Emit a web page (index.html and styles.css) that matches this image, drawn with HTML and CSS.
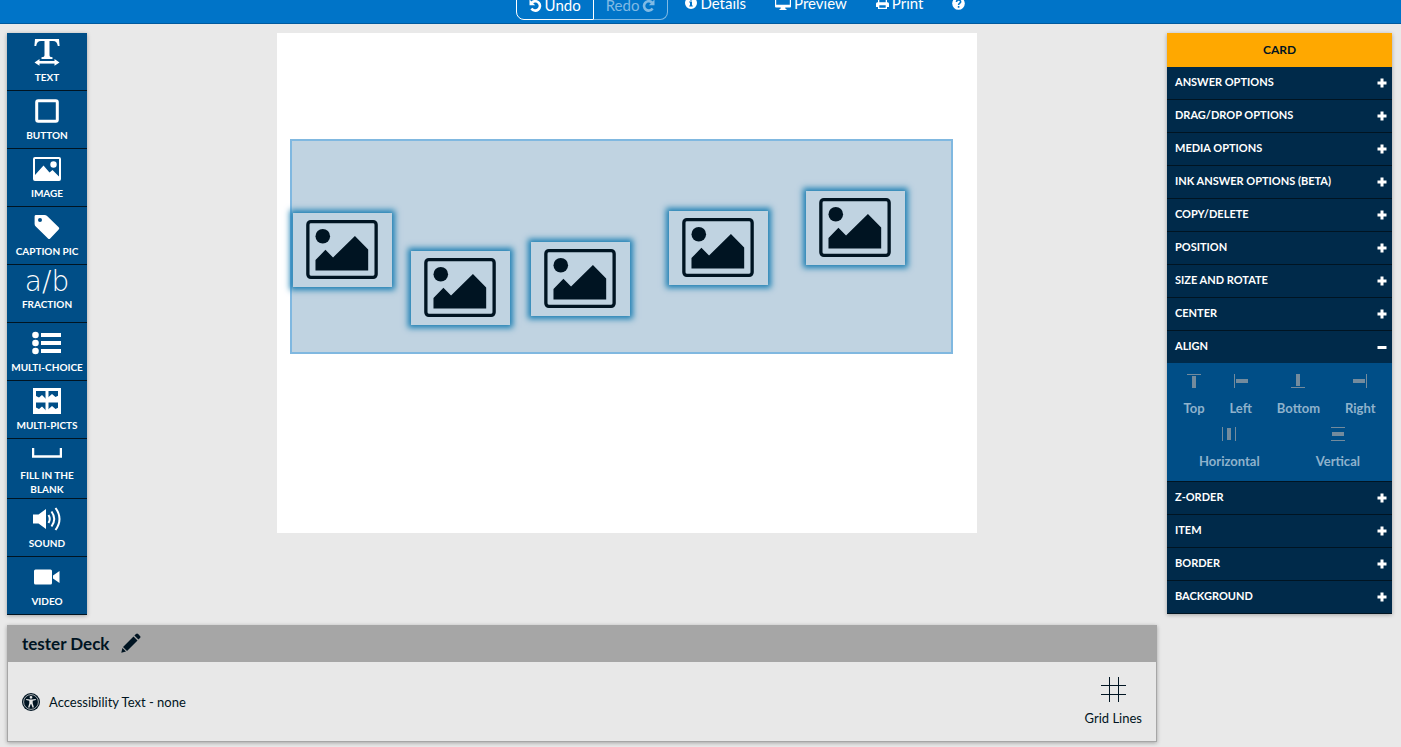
FILE: index.html
```html
<!DOCTYPE html>
<html lang="en">
<head>
    <meta charset="UTF-8">
    <meta name="viewport" content="width=device-width, initial-scale=1.0">
    <title>tester Deck</title>
    <link rel="stylesheet" href="styles.css">
</head>

<body>
    <!-- Shared icon shapes -->
    <svg class="icon-defs" aria-hidden="true">
        <symbol id="picture" viewBox="0 0 216 178">
            <rect x="5" y="5" width="206" height="168" rx="9" fill="none" stroke="currentColor" stroke-width="10"/>
            <circle cx="50" cy="49" r="22"/>
            <path d="M28 121 58 90 81 113 147 48 187 89V152H28z"/>
        </symbol>
        <symbol id="plus" viewBox="0 0 10 10">
            <path d="M3.5 .5h3v3h3v3h-3v3h-3v-3h-3v-3h3z"/>
        </symbol>
        <symbol id="minus" viewBox="0 0 10 10">
            <path d="M.5 4h9v3h-9z"/>
        </symbol>
    </svg>

    <header class="header">
        <div class="history">
            <button type="button">
                <svg width="13" height="13" viewBox="0 0 13 13"><path d="M3 3.500A4.700 4.700 0 1 1 2.400 9.600" fill="none" stroke="currentColor" stroke-width="2.600"/><path d="M.5 .5V6.200H6.200z"/></svg>
                Undo
            </button>
            <button type="button" disabled>
                Redo
                <svg width="13" height="13" viewBox="0 0 13 13"><path d="M10 3.500A4.700 4.700 0 1 0 10.600 9.600" fill="none" stroke="currentColor" stroke-width="2.600"/><path d="M12.500 .5V6.200H6.800z"/></svg>
            </button>
        </div>
        <nav class="menu">
            <a href="#">
                <svg width="12" height="12" viewBox="0 0 12 12"><path fill-rule="evenodd" d="M6 0a6 6 0 1 1 0 12A6 6 0 0 1 6 0zM5 1.700v1.800h2V1.700zM4.200 4.600v1H5v2.800h-.8v1.100h3.600V8.400H7V4.600z"/></svg>
                Details
            </a>
            <a href="#">
                <svg width="16" height="13" viewBox="0 0 16 13"><path fill-rule="evenodd" d="M1 0h14a1 1 0 0 1 1 1v8.500a1 1 0 0 1-1 1h-4.800l.4 1.500h.9v1h-7v-1h.9l.4-1.500H1a1 1 0 0 1-1-1V1a1 1 0 0 1 1-1zM1.200 1.200v6.600h13.600V1.200z"/></svg>
                Preview
            </a>
            <a href="#">
                <svg width="13" height="12" viewBox="0 0 13 12"><path fill-rule="evenodd" d="M2.500 0h7l1.500 1.600V5.200h.5A1.500 1.500 0 0 1 13 6.700V10h-2v2H2v-2H0V6.700a1.500 1.500 0 0 1 1.500-1.500h.5V0zM3.300 1.200v4h6.400V2.600H8V1.200zM3.300 8.300v2.500h6.400V8.300z"/></svg>
                Print
            </a>
            <a href="#" aria-label="Help">
                <svg width="13" height="13" viewBox="0 0 13 13"><circle cx="6.500" cy="6.500" r="6.300"/><path d="M4.500 5.100c0-2.800 4.200-2.700 4.100-.2C8.600 6.300 6.600 6.200 6.600 8M6.600 9v1.700" fill="none" stroke="#0074c8" stroke-width="1.600"/></svg>
            </a>
        </nav>
    </header>

    <main class="editor">
        <div class="work">
            <div class="board">
                <div class="tools">
                    <button type="button" class="tool">
                        <span class="tool-icon"><svg width="26" height="28" viewBox="0 0 26 28"><path d="M1 0h24l.6 7h-1.800C23.200 3.500 22 2 19 2h-3.500v14c0 1.700.7 2 3 2.200V20h-11v-1.800c2.300-.2 3-.5 3-2.200V2H7C4 2 2.800 3.500 2.200 7H.4z"/><path d="M5 22h16v2.600H5z"/><path d="M5.500 20v6.800L.5 23.400zM20.500 20v6.800l5-3.400z"/></svg></span>
                        <span class="tool-label">TEXT</span>
                    </button>
                    <button type="button" class="tool">
                        <span class="tool-icon"><svg width="24" height="24" viewBox="0 0 24 24"><rect x="1.700" y="1.700" width="20.600" height="20.600" rx="1.500" fill="none" stroke="currentColor" stroke-width="3"/></svg></span>
                        <span class="tool-label">BUTTON</span>
                    </button>
                    <button type="button" class="tool">
                        <span class="tool-icon"><svg width="28" height="24" viewBox="0 0 28 24"><rect x="1" y="1" width="26" height="22" rx="1" fill="none" stroke="currentColor" stroke-width="2"/><circle cx="20.500" cy="7.500" r="3.200"/><path d="M2 22.500V18l8.500-9.500 6 7 3-2.500 6.500 6.500v3z"/></svg></span>
                        <span class="tool-label">IMAGE</span>
                    </button>
                    <button type="button" class="tool">
                        <span class="tool-icon"><svg width="26" height="26" viewBox="0 0 26 26"><path fill-rule="evenodd" d="M2 1h8.500a4 4 0 0 1 2.600 1.100L24.700 13.300a1.500 1.500 0 0 1 0 2.200l-8.500 9a1.500 1.500 0 0 1-2.200 0L1.800 12.600A4 4 0 0 1 .6 10V2.400A1.400 1.400 0 0 1 2 1zM6 4a2 2 0 1 0 0 4 2 2 0 0 0 0-4z"/></svg></span>
                        <span class="tool-label">CAPTION PIC</span>
                    </button>
                    <button type="button" class="tool tool-fraction">
                        <span class="tool-icon">a/b</span>
                        <span class="tool-label">FRACTION</span>
                    </button>
                    <button type="button" class="tool">
                        <span class="tool-icon"><svg width="30" height="24" viewBox="0 0 30 24"><circle cx="3.500" cy="4" r="3.300"/><circle cx="3.500" cy="12" r="3.300"/><circle cx="3.500" cy="20" r="3.300"/><path d="M9 2h20v4H9zM9 10h20v4H9zM9 18h20v4H9z"/></svg></span>
                        <span class="tool-label">MULTI-CHOICE</span>
                    </button>
                    <button type="button" class="tool">
                        <span class="tool-icon"><svg width="28" height="26" viewBox="0 0 28 26"><path d="M1.500 1.500h25v23h-25zM14 1v24M1 13h26" fill="none" stroke="currentColor" stroke-width="3"/><path d="M3 12V8l3 1.500 3-2.500 4 4v1zM15 12V9.500L19 6l3.500 3 3-1.500V12zM3 24v-4.500l3 1.500 3-2.500 4 4V24zM15 24v-2.500l4-3.500 3.500 3 3-1.500V24z"/></svg></span>
                        <span class="tool-label">MULTI-PICTS</span>
                    </button>
                    <button type="button" class="tool tool-blank">
                        <span class="tool-icon"><svg width="30" height="10" viewBox="0 0 30 10"><path d="M1 0v8.500h28V0" fill="none" stroke="currentColor" stroke-width="2.500"/></svg></span>
                        <span class="tool-label">FILL IN THE BLANK</span>
                    </button>
                    <button type="button" class="tool">
                        <span class="tool-icon"><svg width="28" height="24" viewBox="0 0 28 24"><path d="M0 7.500h5.500L13 2v20l-7.500-5.500H0z"/><path d="M15.500 8q2.500 4 0 8M18.500 4.500q5.500 7.500 0 15M22.500 1q8 11 0 22" fill="none" stroke="currentColor" stroke-width="2"/></svg></span>
                        <span class="tool-label">SOUND</span>
                    </button>
                    <button type="button" class="tool">
                        <span class="tool-icon"><svg width="26" height="16" viewBox="0 0 26 16"><rect x="0" y=".5" width="18" height="15" rx="1.500"/><path d="M19 6.500 25.500 2v12L19 9.500z"/></svg></span>
                        <span class="tool-label">VIDEO</span>
                    </button>
                </div>

                <div class="stage-area">
                    <div class="stage">
                        <div class="selection"></div>
                        <div class="item item-1"><svg><use href="#picture"/></svg></div>
                        <div class="item item-2"><svg><use href="#picture"/></svg></div>
                        <div class="item item-3"><svg><use href="#picture"/></svg></div>
                        <div class="item item-4"><svg><use href="#picture"/></svg></div>
                        <div class="item item-5"><svg><use href="#picture"/></svg></div>
                    </div>
                </div>
            </div>

            <section class="deck">
                <div class="deck-title">
                    <h1>tester Deck</h1>
                    <button type="button" aria-label="Rename deck">
                        <svg width="20" height="20" viewBox="0 0 20 20"><path d="M15 1a1.500 1.500 0 0 1 2.100 0L19 2.900A1.500 1.500 0 0 1 19 5l-1.600 1.600-4-4zM12.500 3.500l4 4L6 18l-4-4zM1.400 15l3.600 3.600L.3 19.700z"/></svg>
                    </button>
                </div>
                <div class="deck-body">
                    <button type="button" class="access">
                        <svg width="18" height="18" viewBox="0 0 18 18"><circle cx="9" cy="9" r="9"/><circle cx="9" cy="9" r="7.400" fill="none" stroke="#e8e8e8" stroke-width=".7"/><path fill="#e8e8e8" d="M9 2.900a1.400 1.400 0 1 1 0 2.800 1.400 1.400 0 0 1 0-2.800zM4.300 5.900 7.800 6.500h2.400l3.500-.6.2 1.100-3.200.8v2.500l1.200 4-1.200.4L9.200 11h-.4l-1.500 3.700-1.200-.4 1.200-4V7.800L4.100 7z"/></svg>
                        Accessibility Text - none
                    </button>
                    <button type="button" class="grid-lines">
                        <svg width="25" height="25" viewBox="0 0 25 25"><path d="M0 8.500h25M0 17.500h25M8.500 0v25M17.500 0v25" fill="none" stroke="currentColor"/></svg>
                        Grid Lines
                    </button>
                </div>
            </section>
        </div>

        <aside class="options">
            <h2>CARD</h2>
            <button type="button" class="option">ANSWER OPTIONS <svg><use href="#plus"/></svg></button>
            <button type="button" class="option">DRAG/DROP OPTIONS <svg><use href="#plus"/></svg></button>
            <button type="button" class="option">MEDIA OPTIONS <svg><use href="#plus"/></svg></button>
            <button type="button" class="option">INK ANSWER OPTIONS (BETA) <svg><use href="#plus"/></svg></button>
            <button type="button" class="option">COPY/DELETE <svg><use href="#plus"/></svg></button>
            <button type="button" class="option">POSITION <svg><use href="#plus"/></svg></button>
            <button type="button" class="option">SIZE AND ROTATE <svg><use href="#plus"/></svg></button>
            <button type="button" class="option">CENTER <svg><use href="#plus"/></svg></button>
            <button type="button" class="option" aria-expanded="true">ALIGN <svg><use href="#minus"/></svg></button>
            <div class="align">
                <div class="align-row">
                    <button type="button" disabled><svg viewBox="0 0 14 14"><path d="M0 0h14v1H0zM5 2h4v12H5z"/></svg>Top</button>
                    <button type="button" disabled><svg viewBox="0 0 14 14"><path d="M0 0h1v14H0zM2 5h12v4H2z"/></svg>Left</button>
                    <button type="button" disabled><svg viewBox="0 0 14 14"><path d="M0 13h14v1H0zM5 0h4v12H5z"/></svg>Bottom</button>
                    <button type="button" disabled><svg viewBox="0 0 14 14"><path d="M13 0h1v14h-1zM0 5h12v4H0z"/></svg>Right</button>
                </div>
                <div class="align-row">
                    <button type="button" disabled><svg viewBox="0 0 14 14"><path d="M0 0h1v14H0zM13 0h1v14h-1zM5 1h4v12H5z"/></svg>Horizontal</button>
                    <button type="button" disabled><svg viewBox="0 0 14 14"><path d="M0 0h14v1H0zM0 13h14v1H0zM1 5h12v4H1z"/></svg>Vertical</button>
                </div>
            </div>
            <button type="button" class="option">Z-ORDER <svg><use href="#plus"/></svg></button>
            <button type="button" class="option">ITEM <svg><use href="#plus"/></svg></button>
            <button type="button" class="option">BORDER <svg><use href="#plus"/></svg></button>
            <button type="button" class="option">BACKGROUND <svg><use href="#plus"/></svg></button>
        </aside>
    </main>
</body>
</html>
```
FILE: styles.css
```css
* {
    box-sizing: border-box;
}

body {
    margin: 0;
    min-height: 100vh;
    background-color: #e9e9e9;
    color: #001422;
    font-family: Lato, sans-serif;
    font-size: 13px;
}

button {
    margin: 0;
    padding: 0;
    border: none;
    background: none;
    color: inherit;
    font: inherit;
    cursor: pointer;
}

button:disabled {
    cursor: default;
}

svg {
    display: block;
    flex: none;
    fill: currentColor;
}

.icon-defs {
    position: absolute;
    width: 0;
    height: 0;
}

/* Top bar */
.header {
    display: flex;
    justify-content: center;
    align-items: flex-end;
    gap: 17px;
    height: 24px;
    padding: 0 0 3px 80px;
    overflow: hidden;
    background-color: #0074c8;
    border-bottom: 1px solid #005a9e;
    color: #fff;
    font-size: 15px;
    line-height: 20px;
}

.history {
    display: flex;
    height: 32px;
}

.history button {
    display: flex;
    align-items: center;
    gap: 3px;
    padding: 2px 12px 0;
    border: 1px solid #fff;
    border-radius: 0 0 0 8px;
}

.history button:disabled {
    border-color: #80bae4;
    border-left: none;
    border-radius: 0 0 8px 0;
    color: #80bae4;
}

.menu {
    display: flex;
    gap: 29px;
    padding-bottom: 7px;
}

.menu a {
    display: flex;
    align-items: center;
    gap: 3px;
    color: #fff;
    text-decoration: none;
}

/* Page layout */
.editor {
    display: grid;
    grid-template-columns: 1fr 225px;
    align-items: start;
    gap: 10px;
    padding: 9px 9px 5px 7px;
}

.board {
    display: flex;
    align-items: flex-start;
}

/* Left tool bar */
.tools {
    display: flex;
    flex-direction: column;
    flex: none;
    width: 80px;
    background-color: #004e87;
    box-shadow: 0 1px 4px rgba(0, 0, 0, 0.3);
    color: #fff;
}

.tool {
    display: flex;
    flex-direction: column;
    align-items: center;
    min-height: 58px;
    padding-top: 3px;
    border-bottom: 1px solid #001422;
}

.tool-icon {
    display: flex;
    align-items: center;
    justify-content: center;
    height: 33px;
}

.tool-label {
    padding-top: 1px;
    font-size: 10px;
    font-weight: 700;
    line-height: 14px;
}

.tool-fraction .tool-icon {
    height: 28px;
    font-family: "DejaVu Sans", sans-serif;
    font-size: 28px;
    font-weight: 200;
    line-height: 28px;
}

.tool-blank .tool-icon {
    height: 25px;
    padding-bottom: 4px;
}

.tool-blank .tool-label {
    padding: 1px 8px 2px;
}

/* Card canvas */
.stage-area {
    display: flex;
    flex: 1;
    justify-content: center;
    padding-left: 10px;
}

.stage {
    position: relative;
    width: 700px;
    height: 500px;
    background-color: #fff;
}

.selection {
    position: absolute;
    left: 13px;
    top: 106px;
    width: 663px;
    height: 215px;
    border: 2px solid #80b8e0;
    background-color: #c0d3e1;
}

.item {
    position: absolute;
    width: 99px;
    height: 74px;
    padding: 7px 13px;
    background-color: #c0d3e1;
    box-shadow: 0 0 6px 3px #1c7fb3;
}

.item svg {
    width: 72px;
    height: 59px;
}

.item-1 {
    left: 16px;
    top: 180px;
}

.item-2 {
    left: 134px;
    top: 218px;
}

.item-3 {
    left: 254px;
    top: 209px;
}

.item-4 {
    left: 392px;
    top: 178px;
}

.item-5 {
    left: 529px;
    top: 158px;
}

/* Deck panel */
.deck {
    margin-top: 10px;
    border: 1px solid #a6a6a6;
    background-color: #e8e8e8;
    box-shadow: 0 1px 4px rgba(0, 0, 0, 0.3);
}

.deck-title {
    display: flex;
    align-items: center;
    gap: 12px;
    height: 36px;
    padding: 0 0 2px 14px;
    background-color: #a6a6a6;
}

.deck-title h1 {
    margin: 0;
    font-size: 17px;
    font-weight: 700;
}

.deck-body {
    display: flex;
    align-items: center;
    justify-content: space-between;
    padding: 15px 14px;
}

.access {
    display: flex;
    align-items: center;
    gap: 9px;
}

.grid-lines {
    display: flex;
    flex-direction: column;
    align-items: center;
    gap: 8px;
    line-height: 16px;
}

/* Right options panel */
.options {
    background-color: #002a4a;
    border-bottom: 1px solid #001422;
    box-shadow: 0 1px 4px rgba(0, 0, 0, 0.3);
    color: #fff;
}

.options h2 {
    margin: 0;
    background-color: #ffa800;
    color: #001422;
    font-size: 12px;
    font-weight: 700;
    line-height: 34px;
    text-align: center;
}

.option {
    display: flex;
    align-items: center;
    justify-content: space-between;
    width: 100%;
    height: 33px;
    padding: 0 5px 4px 8px;
    border-top: 1px solid #001422;
    font-size: 11px;
    font-weight: 700;
}

.options h2 + .option {
    height: 32px;
    border-top: none;
}

.option svg {
    width: 10px;
    height: 10px;
    margin-top: 3px;
}

.align {
    padding: 11px 4px 1px;
    background-color: #004e87;
    color: #8fb2cc;
}

.align-row {
    display: flex;
    justify-content: space-around;
}

.align-row button {
    display: flex;
    flex-direction: column;
    align-items: center;
    gap: 12px;
    height: 53px;
    font-weight: 700;
    line-height: 16px;
}

.align-row svg {
    width: 14px;
    height: 14px;
    fill: #738b9d;
}
```
